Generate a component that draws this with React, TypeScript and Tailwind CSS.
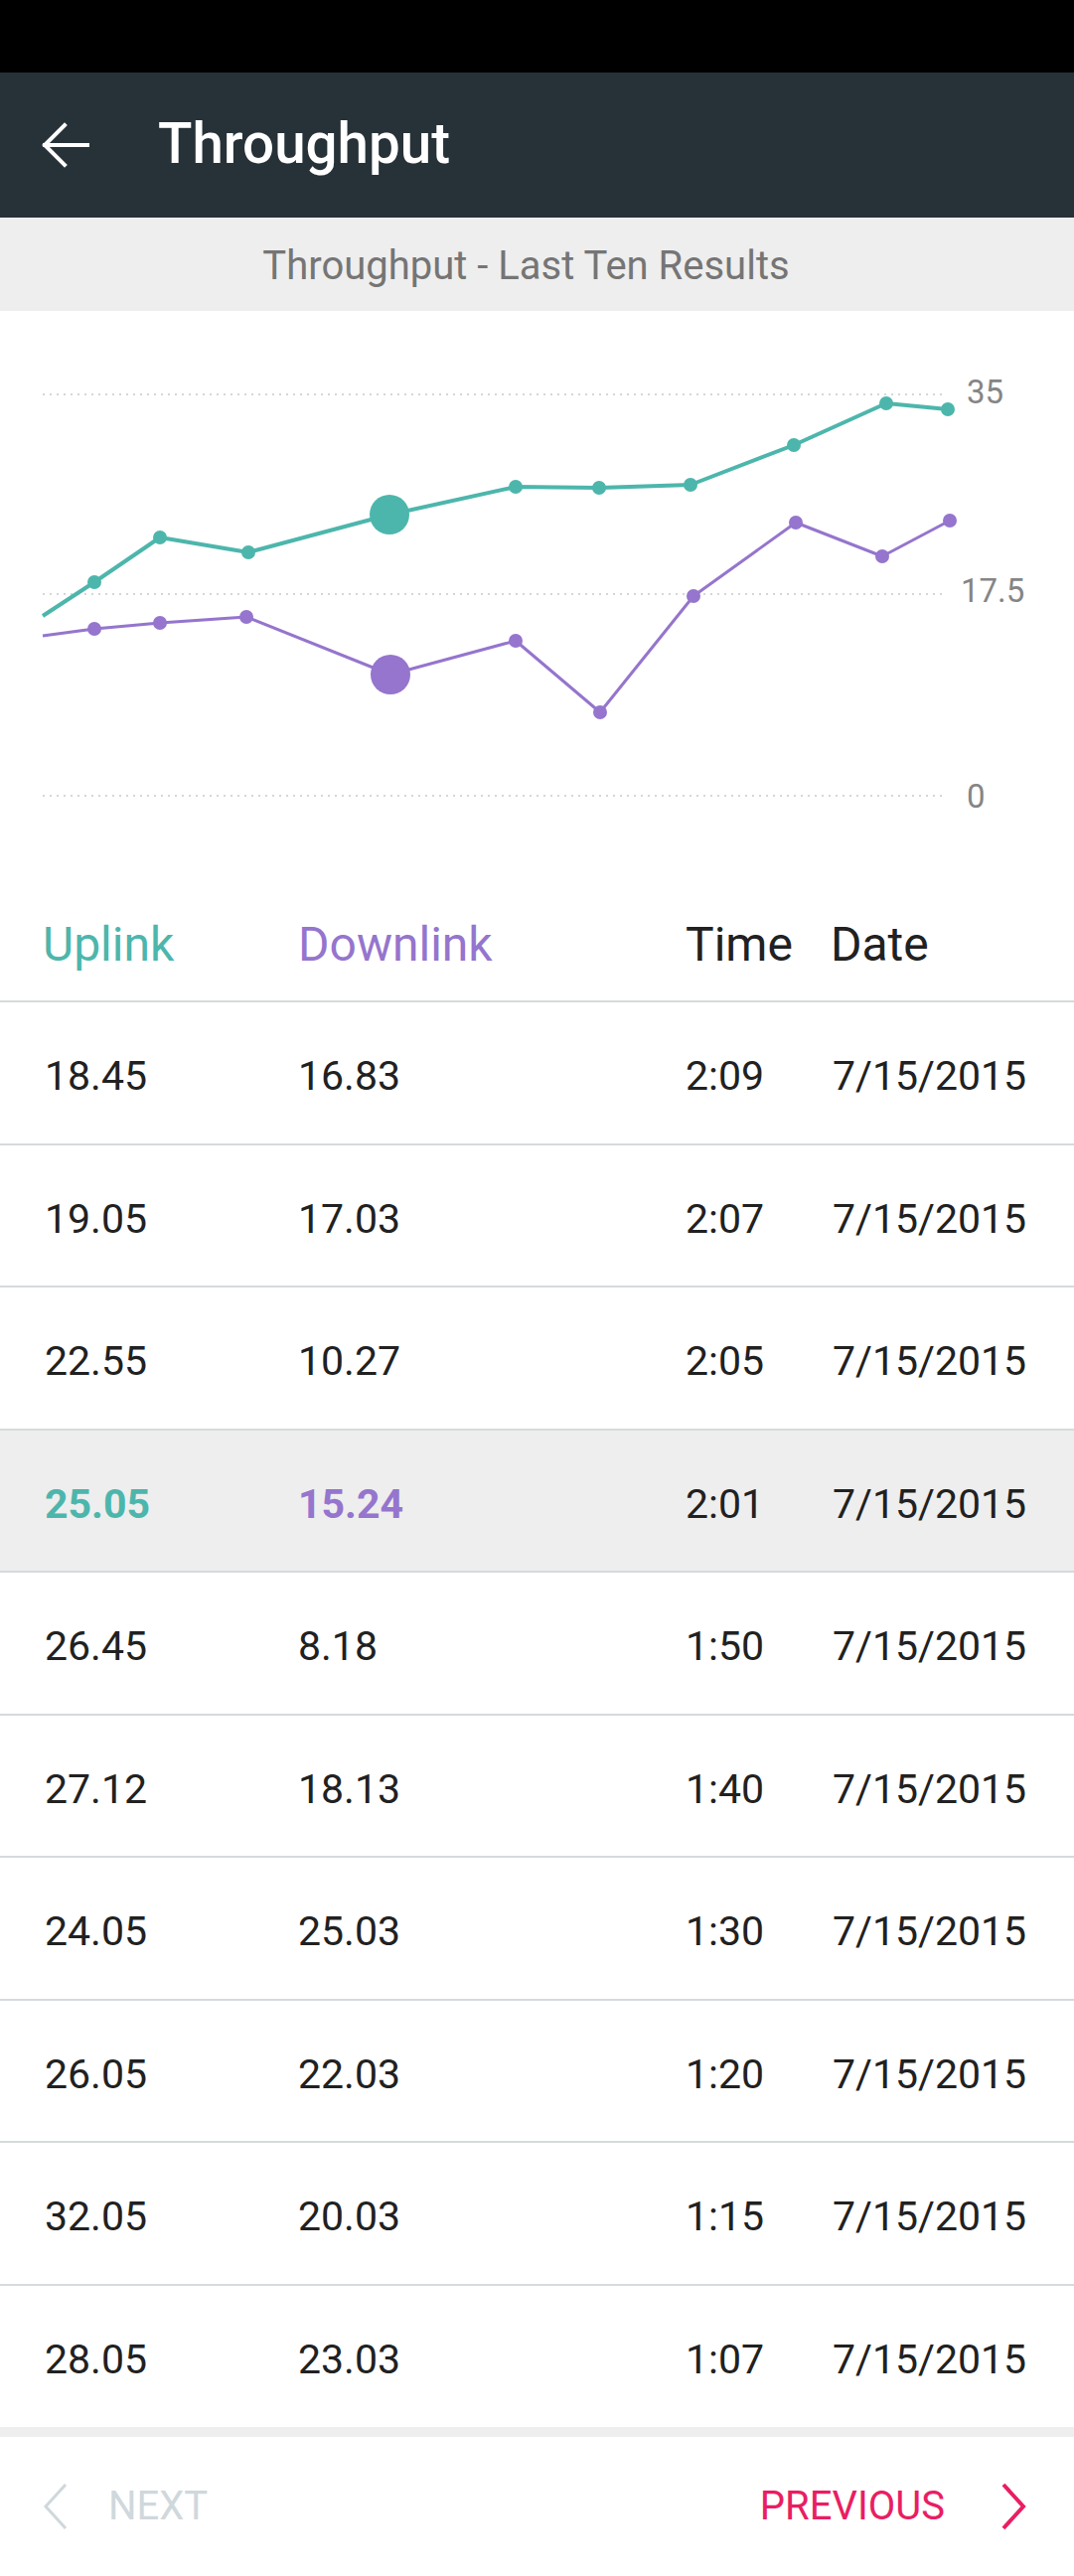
import React from 'react';

const teal = '#4db6ac';
const purple = '#9575cd';

// chart points, measured in chart coordinates (svg is 1081 x 560)
const uplink: [number, number][] = [
  [95, 273], [161, 228], [250, 243], [392, 205], [519, 177],
  [603, 178], [695, 175], [799, 135], [892, 93], [954, 99],
];
const downlink: [number, number][] = [
  [95, 320], [161, 314], [248, 308], [393, 366], [519, 332],
  [604, 404], [698, 287], [801, 213], [888, 247], [956, 211],
];

const rows = [
  { up: '18.45', down: '16.83', time: '2:09', date: '7/15/2015' },
  { up: '19.05', down: '17.03', time: '2:07', date: '7/15/2015' },
  { up: '22.55', down: '10.27', time: '2:05', date: '7/15/2015' },
  { up: '25.05', down: '15.24', time: '2:01', date: '7/15/2015', active: true },
  { up: '26.45', down: '8.18', time: '1:50', date: '7/15/2015' },
  { up: '27.12', down: '18.13', time: '1:40', date: '7/15/2015' },
  { up: '24.05', down: '25.03', time: '1:30', date: '7/15/2015' },
  { up: '26.05', down: '22.03', time: '1:20', date: '7/15/2015' },
  { up: '32.05', down: '20.03', time: '1:15', date: '7/15/2015' },
  { up: '28.05', down: '23.03', time: '1:07', date: '7/15/2015' },
];

function Chart() {
  const upPath = 'M43 307 ' + uplink.map(([x, y]) => `L${x} ${y}`).join(' ');
  const downPath = 'M43 327 ' + downlink.map(([x, y]) => `L${x} ${y}`).join(' ');
  return (
    <svg width="1081" height="560" viewBox="0 0 1081 560" className="block">
      {[84, 285, 488].map((y) => (
        <line key={y} x1="43" x2="950" y1={y} y2={y} stroke="#d6d6d6" strokeWidth="2" strokeDasharray="2 5" />
      ))}
      <g fill="#858585" fontSize="33" fontFamily="Roboto, sans-serif">
        <text x="973" y="93">35</text>
        <text x="967" y="293">17.5</text>
        <text x="973" y="500">0</text>
      </g>
      <path d={upPath} fill="none" stroke={teal} strokeWidth="4" strokeLinejoin="round" />
      <path d={downPath} fill="none" stroke={purple} strokeWidth="3" strokeLinejoin="round" />
      {uplink.map(([x, y], i) => (
        <circle key={'u' + i} cx={x} cy={y} r={i === 3 ? 20 : 7} fill={teal} />
      ))}
      {downlink.map(([x, y], i) => (
        <circle key={'d' + i} cx={x} cy={y} r={i === 3 ? 20 : 7} fill={purple} />
      ))}
    </svg>
  );
}

export default function App() {
  return (
    <div className="w-[1081px] h-[2593px] bg-white overflow-hidden font-['Roboto',sans-serif]">
      {/* status bar */}
      <div className="h-[73px] bg-black" />

      {/* toolbar */}
      <div className="h-[146px] bg-[#263238] flex items-center pl-[42px]">
        <svg width="48" height="46" viewBox="0 0 48 46" className="shrink-0">
          <path d="M3 23 H46 M23 3 L3 23 L23 43" fill="none" stroke="#fff" strokeWidth="4" strokeLinecap="square" />
        </svg>
        <h1 className="ml-[69px] text-[56.5px] leading-none font-medium text-white -mt-[2px]">Throughput</h1>
      </div>

      {/* subheader */}
      <div className="h-[94px] bg-[#eeeeee] flex items-center justify-center pr-[22px]">
        <span className="text-[40px] leading-none text-[#757575] mt-[3px]">Throughput - Last Ten Results</span>
      </div>

      <Chart />

      {/* table header */}
      <div className="h-[136px] border-b-2 border-[#d5dadc] flex pt-[54px] pl-[43px] text-[48px] leading-[48px]">
        <div className="w-[257px] text-[#4db6ac]">Uplink</div>
        <div className="w-[390px] text-[#9575cd]">Downlink</div>
        <div className="w-[146px] text-[#212121]">Time</div>
        <div className="text-[#212121]">Date</div>
      </div>

      {/* rows */}
      {rows.map((r, i) => (
        <div
          key={i}
          className={`flex pt-[54px] pl-[45px] text-[41px] leading-[40px] text-[#212121] ${
            i < rows.length - 1 ? 'h-[143.5px] border-b-2 border-[#d5dadc]' : 'h-[142px]'
          } ${r.active ? 'bg-[#eeeeee]' : ''}`}
        >
          <div className={`w-[255px] ${r.active ? 'font-bold text-[#4db6ac]' : ''}`}>{r.up}</div>
          <div className={`w-[390px] ${r.active ? 'font-bold text-[#9575cd]' : ''}`}>{r.down}</div>
          <div className="w-[148px]">{r.time}</div>
          <div>{r.date}</div>
        </div>
      ))}

      <div className="h-[10px] bg-[#eeeeee]" />

      {/* footer */}
      <div className="h-[140px] flex items-center justify-between pl-[43px] pr-[48px]">
        <div className="flex items-center">
          <svg width="26" height="48" viewBox="0 0 26 48">
            <path d="M23 2 L3 24 L23 46" fill="none" stroke="#cfd8dc" strokeWidth="3" />
          </svg>
          <span className="ml-[40px] text-[40px] leading-[40px] text-[#cfd8dc]">NEXT</span>
        </div>
        <div className="flex items-center">
          <span className="text-[40px] leading-[40px] text-[#e91e63]">PREVIOUS</span>
          <svg width="26" height="48" viewBox="0 0 26 48" className="ml-[56px]">
            <path d="M3 2 L23 24 L3 46" fill="none" stroke="#e91e63" strokeWidth="4" />
          </svg>
        </div>
      </div>
    </div>
  );
}
